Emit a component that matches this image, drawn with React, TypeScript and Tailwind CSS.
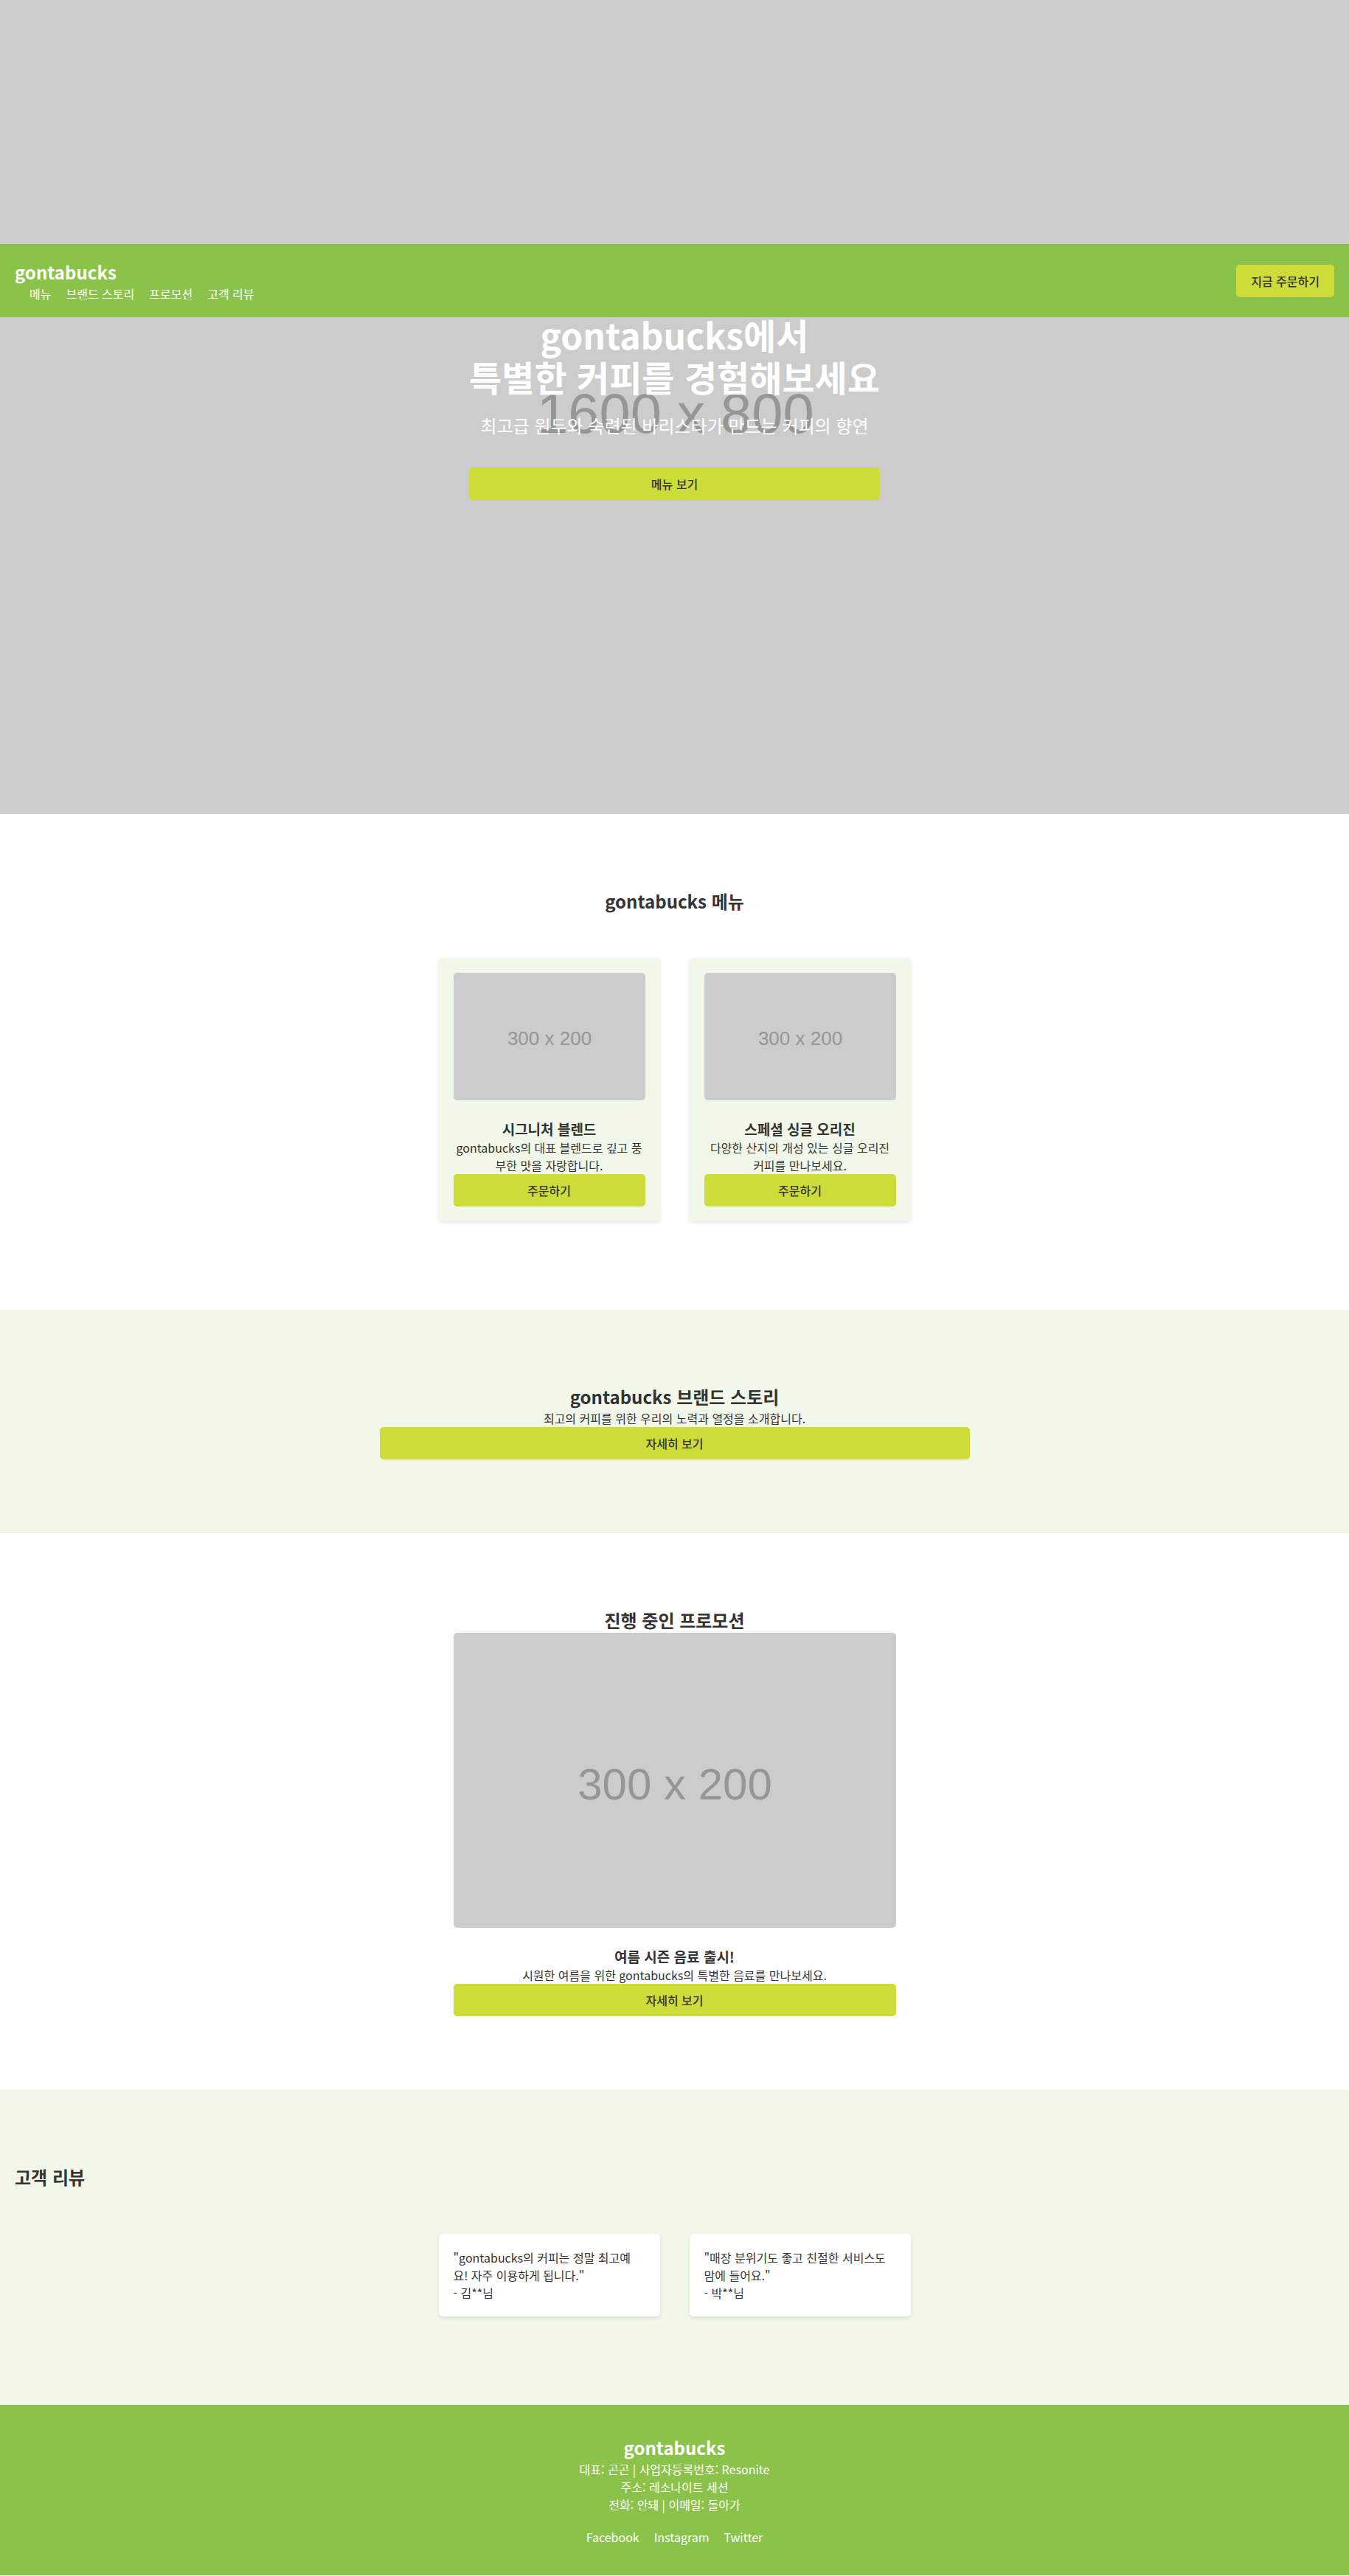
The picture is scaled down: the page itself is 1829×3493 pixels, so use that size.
import type { ReactNode } from 'react';

const navLinks = ['메뉴', '브랜드 스토리', '프로모션', '고객 리뷰'];
const socialLinks = ['Facebook', 'Instagram', 'Twitter'];

const menuItems = [
  { title: '시그니처 블렌드', lines: ['gontabucks의 대표 블렌드로 깊고 풍', '부한 맛을 자랑합니다.'] },
  { title: '스페셜 싱글 오리진', lines: ['다양한 산지의 개성 있는 싱글 오리진', '커피를 만나보세요.'] },
];

const reviews = [
  { lines: ['"gontabucks의 커피는 정말 최고예', '요! 자주 이용하게 됩니다."'], author: '- 김**님' },
  { lines: ['"매장 분위기도 좋고 친절한 서비스도', '맘에 들어요."'], author: '- 박**님' },
];

function Button({ children, className = '' }: { children: ReactNode; className?: string }) {
  return (
    <button
      type="button"
      className={`rounded-[5px] bg-[#cddc39] px-5 py-2.5 text-base leading-6 font-medium text-[#333] ${className}`}
    >
      {children}
    </button>
  );
}

function Placeholder({ className }: { className: string }) {
  return (
    <svg
      viewBox="0 0 300 200"
      preserveAspectRatio="xMidYMid slice"
      role="img"
      aria-label="300 x 200"
      className={`block w-full rounded-[5px] bg-[#ccc] ${className}`}
    >
      <text x="150" y="113" textAnchor="middle" fontSize="30" fill="#969696" className="font-['Liberation_Sans',sans-serif]">
        300 x 200
      </text>
    </svg>
  );
}

function SectionTitle({ children }: { children: ReactNode }) {
  return <h2 className="text-2xl leading-[35px] font-bold">{children}</h2>;
}

function CardTitle({ children }: { children: ReactNode }) {
  return <h3 className="mt-[25px] text-[19px] leading-[27px] font-bold">{children}</h3>;
}

function Lines({ lines }: { lines: string[] }) {
  return (
    <p>
      {lines.map((line) => (
        <span key={line} className="block">{line}</span>
      ))}
    </p>
  );
}

export default function App() {
  return (
    <div lang="ko" className="relative bg-white font-['Noto_Sans_CJK_KR',sans-serif] text-base leading-6 font-normal text-[#333]">
      <header className="absolute inset-x-0 top-[331px] z-10 flex items-center justify-between bg-[#8bc34a] p-5 text-white">
        <div>
          <div className="text-2xl leading-[35px] font-bold">gontabucks</div>
          <nav className="flex gap-5 pl-5">
            {navLinks.map((label) => (
              <a key={label} href="#">{label}</a>
            ))}
          </nav>
        </div>
        <Button>지금 주문하기</Button>
      </header>

      <section className="relative flex h-[1104px] items-center justify-center bg-[#ccc] pb-0.5 text-center text-white">
        <svg
          viewBox="0 0 1600 800"
          preserveAspectRatio="xMidYMid slice"
          aria-hidden="true"
          className="absolute inset-0 h-full w-full"
        >
          <text x="801" y="425" textAnchor="middle" fontSize="55" fill="#969696" className="font-['Liberation_Sans',sans-serif]">
            1600 x 800
          </text>
        </svg>
        <div className="relative flex flex-col">
          <h1 className="text-5xl leading-[57px] font-bold">
            gontabucks에서
            <br />
            특별한 커피를 경험해보세요
          </h1>
          <p className="mt-5 mb-10 text-2xl leading-[35px]">최고급 원두와 숙련된 바리스타가 만드는 커피의 향연</p>
          <Button>메뉴 보기</Button>
        </div>
      </section>

      <section className="px-5 py-[100px] text-center">
        <SectionTitle>gontabucks 메뉴</SectionTitle>
        <div className="my-5 flex flex-wrap justify-center pt-10">
          {menuItems.map((item) => (
            <article key={item.title} className="mx-5 w-[300px] rounded-[5px] bg-[#f1f8e9] p-5 shadow-[0_2px_5px_rgba(0,0,0,0.1)]">
              <Placeholder className="h-[173px]" />
              <CardTitle>{item.title}</CardTitle>
              <Lines lines={item.lines} />
              <Button className="w-full">주문하기</Button>
            </article>
          ))}
        </div>
      </section>

      <section className="bg-[#f1f8e9] px-5 py-[100px] text-center">
        <div className="mx-auto max-w-[800px]">
          <SectionTitle>gontabucks 브랜드 스토리</SectionTitle>
          <p>최고의 커피를 위한 우리의 노력과 열정을 소개합니다.</p>
          <Button className="w-full">자세히 보기</Button>
        </div>
      </section>

      <section className="px-5 py-[100px] text-center">
        <div className="mx-auto max-w-[600px]">
          <SectionTitle>진행 중인 프로모션</SectionTitle>
          <Placeholder className="h-[400px]" />
          <CardTitle>여름 시즌 음료 출시!</CardTitle>
          <p>시원한 여름을 위한 gontabucks의 특별한 음료를 만나보세요.</p>
          <Button className="w-full">자세히 보기</Button>
        </div>
      </section>

      <section className="bg-[#f1f8e9] px-5 py-[100px]">
        <SectionTitle>고객 리뷰</SectionTitle>
        <div className="my-5 flex flex-wrap justify-center pt-10">
          {reviews.map((review) => (
            <blockquote key={review.author} className="mx-5 w-[300px] rounded-[5px] bg-white p-5 shadow-[0_2px_5px_rgba(0,0,0,0.1)]">
              <Lines lines={review.lines} />
              <footer>{review.author}</footer>
            </blockquote>
          ))}
        </div>
      </section>

      <footer className="bg-[#8bc34a] px-5 py-10 text-center text-white">
        <div className="text-2xl leading-[35px] font-bold">gontabucks</div>
        <p>대표: 곤곤 | 사업자등록번호: Resonite</p>
        <p>주소: 레소나이트 세션</p>
        <p>전화: 안돼 | 이메일: 돌아가</p>
        <nav className="mt-5 flex justify-center gap-5">
          {socialLinks.map((label) => (
            <a key={label} href="#">{label}</a>
          ))}
        </nav>
      </footer>
    </div>
  );
}
